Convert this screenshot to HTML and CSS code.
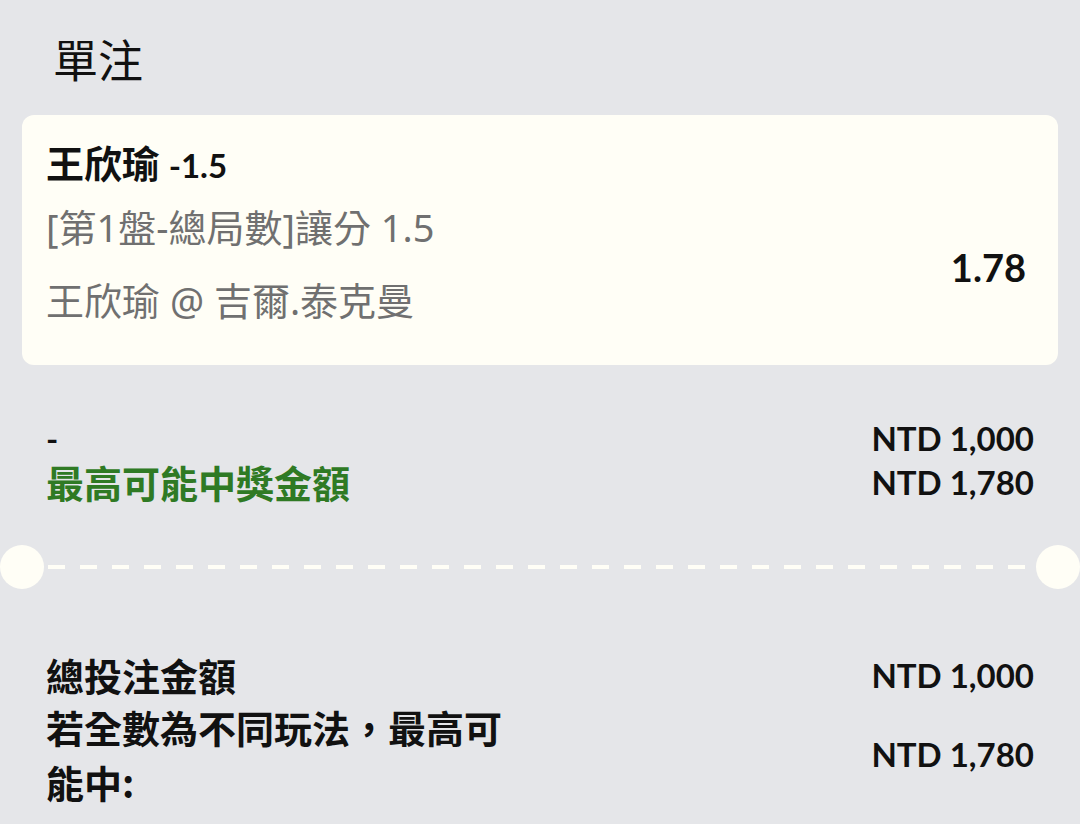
FILE: index.html
```html
<!DOCTYPE html>
<html lang="zh-Hant">
<head>
    <meta charset="UTF-8">
    <meta name="viewport" content="width=device-width, initial-scale=1.0">
    <title>單注</title>
    <link rel="stylesheet" href="styles.css">
</head>
<body>
    <div class="slip">
        <h1 class="title">單注</h1>

        <div class="bet-card">
            <div class="bet-info">
                <div class="bet-pick">王欣瑜 <span class="num">-1.5</span></div>
                <div class="bet-market">[第1盤-總局數]讓分 1.5</div>
                <div class="bet-match">王欣瑜 @ 吉爾.泰克曼</div>
            </div>
            <div class="bet-odds">1.78</div>
        </div>

        <div class="stake">
            <div class="row">
                <span class="label dash">-</span>
                <span class="amount">NTD 1,000</span>
            </div>
            <div class="row">
                <span class="label win">最高可能中獎金額</span>
                <span class="amount">NTD 1,780</span>
            </div>
        </div>

        <div class="divider">
            <span class="dot"></span>
            <span class="dashes"></span>
            <span class="dot"></span>
        </div>

        <div class="summary">
            <div class="row">
                <span class="label">總投注金額</span>
                <span class="amount">NTD 1,000</span>
            </div>
            <div class="row">
                <span class="label wrap">若全數為不同玩法，最高可能中:</span>
                <span class="amount">NTD 1,780</span>
            </div>
        </div>
    </div>
</body>
</html>
```

FILE: styles.css
```css
body {
    margin: 0;
    background: #e5e6e9;
    font-family: Lato, "Noto Sans CJK TC", sans-serif;
    color: #111;
}

.slip {
    width: 1080px;
    height: 824px;
    overflow: hidden;
}

.title {
    margin: 0;
    padding: 31px 0 0 53px;
    height: 115px;
    box-sizing: border-box;
    font-family: "Noto Sans CJK TC", sans-serif;
    font-size: 45px;
    font-weight: 400;
    line-height: 56px;
}

.num {
    font-family: Lato, sans-serif;
    font-size: 33px;
    font-weight: 700;
}

.bet-card {
    margin: 0 22px;
    height: 250px;
    box-sizing: border-box;
    background: #fffef6;
    border-radius: 12px;
    padding: 20px 32px 0 24px;
    display: flex;
    justify-content: space-between;
    align-items: center;
}

.bet-info {
    align-self: flex-start;
    display: flex;
    flex-direction: column;
}

.bet-pick {
    font-family: "Noto Sans CJK TC", sans-serif;
    font-size: 38px;
    font-weight: 700;
    line-height: 54px;
}

.bet-market,
.bet-match {
    font-family: "Noto Sans", "Noto Sans CJK TC", sans-serif;
    font-size: 38px;
    color: #707070;
    line-height: 70px;
}

.bet-match {
    margin-top: 3px;
}

.bet-odds {
    font-size: 38px;
    font-weight: 700;
    margin-top: 34px;
}

.stake {
    padding: 51px 46px 0 46px;
}

.row {
    display: flex;
    justify-content: space-between;
    align-items: center;
}

.label {
    font-family: "Noto Sans CJK TC", sans-serif;
    font-size: 38px;
    font-weight: 700;
    line-height: 44px;
}

.dash {
    font-family: Lato, sans-serif;
    font-size: 33px;
    line-height: 40px;
}

.amount {
    font-size: 33px;
    font-weight: 700;
    line-height: 44px;
}

.win {
    color: #2f7a24;
}

.divider {
    display: flex;
    align-items: center;
    height: 46px;
    margin-top: 40px;
}

.dot {
    width: 44px;
    height: 44px;
    border-radius: 50%;
    background: #fffef6;
    flex: none;
}

.dashes {
    flex: 1;
    height: 4px;
    margin: 0 4px;
    background: repeating-linear-gradient(90deg, #fffef6 0 17px, transparent 17px 32px);
}

.summary {
    padding: 63px 46px 0 46px;
}

.summary .row {
    margin-bottom: 2px;
}

.wrap {
    width: 476px;
    line-height: 55px;
}
```
